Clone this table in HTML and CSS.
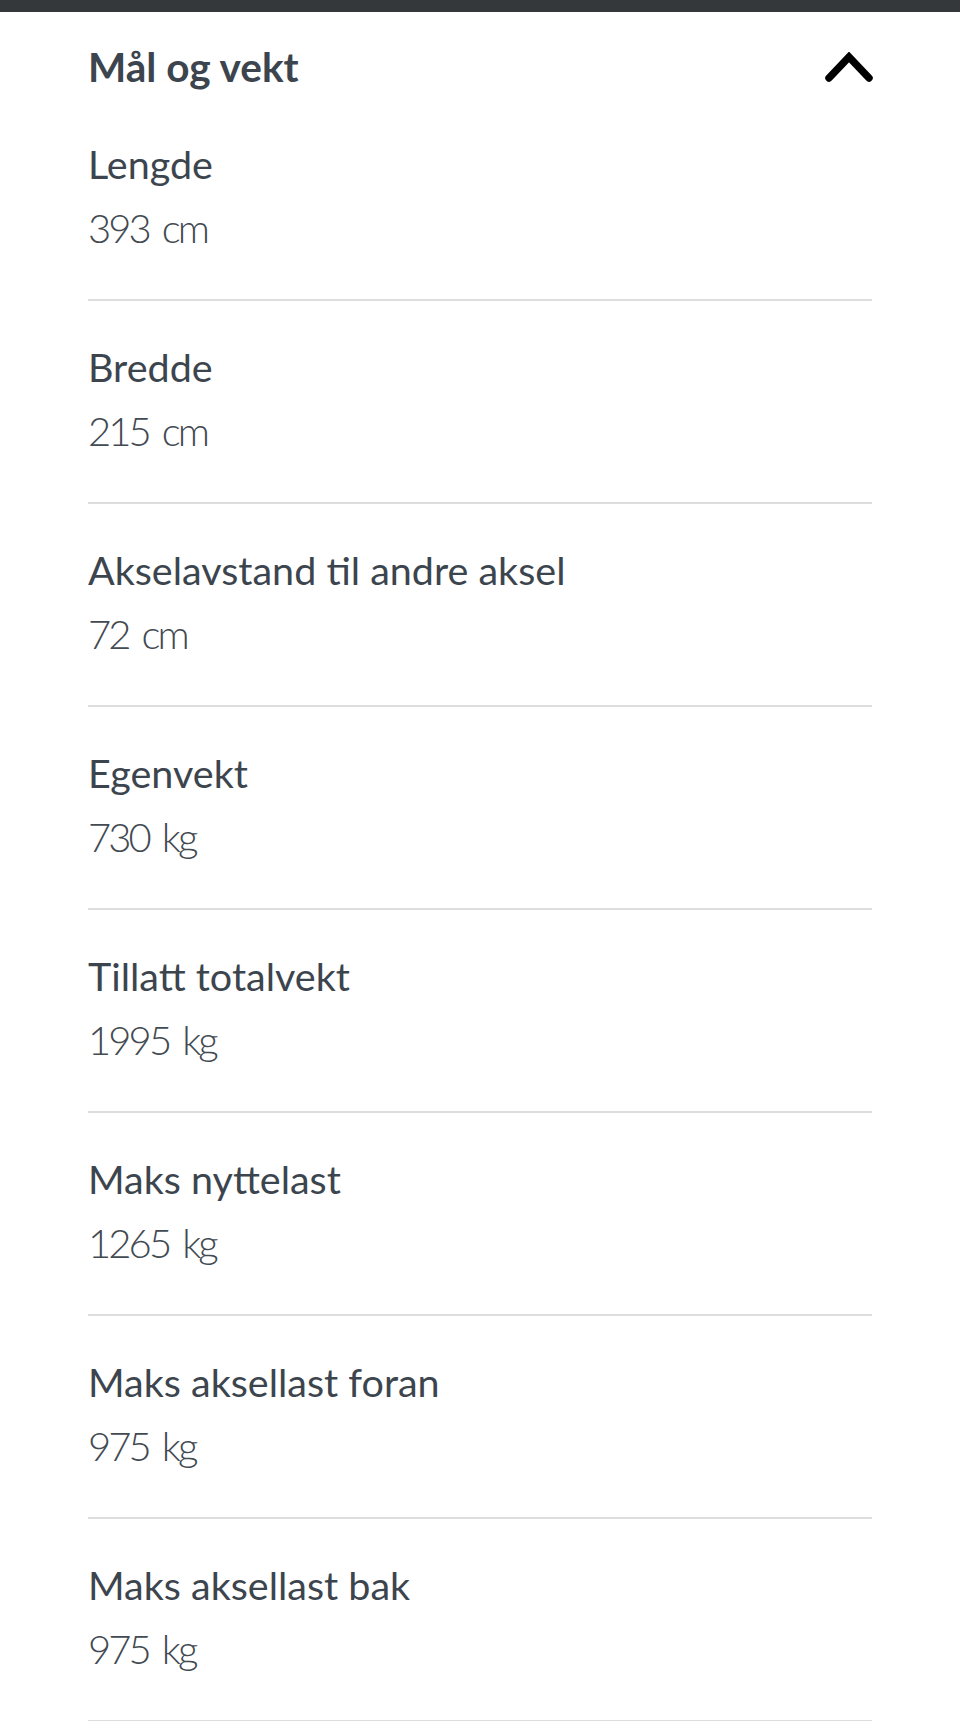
FILE: index.html
```html
<!DOCTYPE html>
<html lang="no">
<head>
<meta charset="utf-8">
<title>Mål og vekt</title>
<link rel="stylesheet" href="styles.css">
</head>
<body>
<div class="topbar"></div>
<section class="panel">
  <header class="panel-head">
    <h2 class="panel-title">Mål og vekt</h2>
    <svg class="chevron" width="48" height="30" viewBox="0 0 48 30" aria-hidden="true">
      <path d="M4 26 L24 5 L44 26" fill="none" stroke="#000" stroke-width="7.5" stroke-linecap="round" stroke-linejoin="miter"/>
    </svg>
  </header>
  <dl class="specs">
    <div class="row"><dt>Lengde</dt><dd>393 cm</dd></div>
    <div class="row"><dt>Bredde</dt><dd>215 cm</dd></div>
    <div class="row"><dt>Akselavstand til andre aksel</dt><dd>72 cm</dd></div>
    <div class="row"><dt>Egenvekt</dt><dd>730 kg</dd></div>
    <div class="row"><dt>Tillatt totalvekt</dt><dd>1995 kg</dd></div>
    <div class="row"><dt>Maks nyttelast</dt><dd>1265 kg</dd></div>
    <div class="row"><dt>Maks aksellast foran</dt><dd>975 kg</dd></div>
    <div class="row"><dt>Maks aksellast bak</dt><dd>975 kg</dd></div>
  </dl>
</section>
</body>
</html>
```
FILE: styles.css
```css
html, body {
  margin: 0;
  padding: 0;
  background: #ffffff;
}
body {
  font-family: "Lato", "Liberation Sans", sans-serif;
  color: #3c454e;
}
.topbar {
  height: 12px;
  background: #35383b;
}
.panel {
  padding: 0 88px;
}
.panel-head {
  display: flex;
  align-items: center;
  justify-content: space-between;
  padding: 31px 0 7px;
}
.panel-title {
  margin: 0;
  font-size: 40.5px;
  line-height: 48px;
  font-weight: 700;
  letter-spacing: 0;
  color: #3c454e;
}
.chevron {
  display: block;
  margin-right: -1px;
}
.specs {
  margin: 0;
}
.row {
  padding: 42px 0 47px;
  border-bottom: 2px solid #dddddd;
}
.row dt {
  margin: 0 0 16px;
  font-size: 39.5px;
  line-height: 48px;
  font-weight: 400;
  color: #3c454e;
}
.row dd {
  margin: 0;
  font-size: 40px;
  line-height: 48px;
  font-weight: 300;
  letter-spacing: -2.9px;
  word-spacing: 5px;
  color: #424a52;
}
```
